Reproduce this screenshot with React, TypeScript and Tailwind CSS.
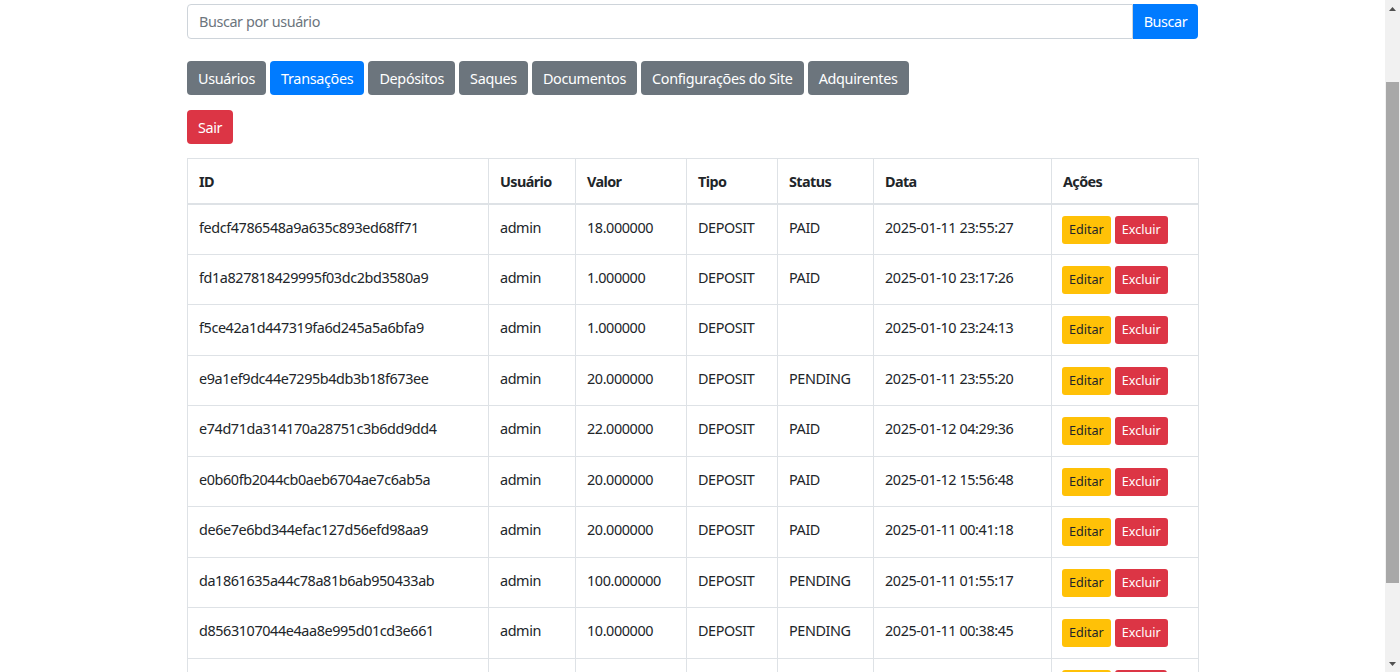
import React from "react";

const rows = [
  ["fedcf4786548a9a635c893ed68ff71", "admin", "18.000000", "DEPOSIT", "PAID", "2025-01-11 23:55:27"],
  ["fd1a827818429995f03dc2bd3580a9", "admin", "1.000000", "DEPOSIT", "PAID", "2025-01-10 23:17:26"],
  ["f5ce42a1d447319fa6d245a5a6bfa9", "admin", "1.000000", "DEPOSIT", "", "2025-01-10 23:24:13"],
  ["e9a1ef9dc44e7295b4db3b18f673ee", "admin", "20.000000", "DEPOSIT", "PENDING", "2025-01-11 23:55:20"],
  ["e74d71da314170a28751c3b6dd9dd4", "admin", "22.000000", "DEPOSIT", "PAID", "2025-01-12 04:29:36"],
  ["e0b60fb2044cb0aeb6704ae7c6ab5a", "admin", "20.000000", "DEPOSIT", "PAID", "2025-01-12 15:56:48"],
  ["de6e7e6bd344efac127d56efd98aa9", "admin", "20.000000", "DEPOSIT", "PAID", "2025-01-11 00:41:18"],
  ["da1861635a44c78a81b6ab950433ab", "admin", "100.000000", "DEPOSIT", "PENDING", "2025-01-11 01:55:17"],
  ["d8563107044e4aa8e995d01cd3e661", "admin", "10.000000", "DEPOSIT", "PENDING", "2025-01-11 00:38:45"],
];

const tabs = ["Usuários", "Transações", "Depósitos", "Saques", "Documentos", "Configurações do Site", "Adquirentes"];

export default function App() {
  return (
    <div
      className="flex h-[672px] w-[1400px] overflow-hidden bg-white text-[#212529]"
      style={{ fontFamily: '"Noto Sans", "Open Sans", sans-serif' }}
    >
      <div className="flex-1 overflow-hidden">
        <div className="mx-auto w-[1011px] pt-[4px] text-[14.4px] leading-[21.6px] tracking-[-0.4px]">
          <div className="flex h-[35px]">
            <div className="flex flex-1 items-center rounded-l-[4px] border border-[#ced4da] px-[11px] pt-[1px] text-[#6c757d]">
              Buscar por usuário
            </div>
            <button className="w-[65px] rounded-r-[4px] bg-[#007bff] pt-[1px] text-white">Buscar</button>
          </div>

          <div className="mt-[22px] flex gap-[4px] tracking-[-0.32px]">
            {tabs.map((t) => (
              <button
                key={t}
                className={`h-[34px] rounded-[4px] px-[11px] pt-[1px] text-white ${t === "Transações" ? "bg-[#007bff]" : "bg-[#6c757d]"}`}
              >
                {t}
              </button>
            ))}
          </div>

          <div className="mt-[15px]">
            <button className="h-[34px] rounded-[4px] bg-[#dc3545] px-[11px] pt-[1px] text-white">Sair</button>
          </div>

          <table className="mt-[14px] w-[1011px] table-fixed border-collapse border border-[#dee2e6]">
            <colgroup>
              <col className="w-[301px]" />
              <col className="w-[87px]" />
              <col className="w-[111px]" />
              <col className="w-[91px]" />
              <col className="w-[96px]" />
              <col className="w-[178px]" />
              <col className="w-[147px]" />
            </colgroup>
            <thead>
              <tr className="h-[45px]">
                {["ID", "Usuário", "Valor", "Tipo", "Status", "Data", "Ações"].map((h) => (
                  <th
                    key={h}
                    className="border border-b-2 border-[#dee2e6] px-[11px] pt-[12px] text-left align-top font-bold tracking-[-0.6px]"
                  >
                    {h}
                  </th>
                ))}
              </tr>
            </thead>
            <tbody>
              {rows.map((r) => (
                <tr key={r[0]} className="h-[50.5px]">
                  {r.map((c, i) => (
                    <td key={i} className="border border-[#dee2e6] px-[11px] pt-[12px] align-top whitespace-nowrap">
                      {c}
                    </td>
                  ))}
                  <td className="border border-[#dee2e6] px-[10px] pt-[11px] align-top">
                    <div className="flex gap-[4px] text-[12.6px] tracking-normal">
                      <button className="h-[28px] rounded-[3px] bg-[#ffc107] px-[7px] text-[#212529]">Editar</button>
                      <button className="h-[28px] rounded-[3px] bg-[#dc3545] px-[7px] text-white">Excluir</button>
                    </div>
                  </td>
                </tr>
              ))}
              <tr className="h-[50.5px]">
                {[0, 1, 2, 3, 4, 5].map((i) => (
                  <td key={i} className="border border-[#dee2e6]" />
                ))}
                <td className="border border-[#dee2e6] px-[10px] pt-[11px] align-top">
                  <div className="flex gap-[4px]">
                    <div className="h-[28px] w-[49px] rounded-[3px] bg-[#ffc107]" />
                    <div className="h-[28px] w-[52px] rounded-[3px] bg-[#dc3545]" />
                  </div>
                </td>
              </tr>
            </tbody>
          </table>
        </div>
      </div>
      <div className="flex w-[15px] flex-col items-center bg-[#f1f1f1]">
        <div className="flex h-[17px] items-center justify-center">
          <svg width="7" height="4" viewBox="0 0 7 4"><path d="M3.5 0 L7 4 L0 4 Z" fill="#505050" /></svg>
        </div>
        <div className="mt-[65px] h-[501px] w-[13px] bg-[#a8a8a8]" />
        <div className="flex-1" />
        <div className="flex h-[17px] items-center justify-center">
          <svg width="7" height="4" viewBox="0 0 7 4"><path d="M0 0 L7 0 L3.5 4 Z" fill="#505050" /></svg>
        </div>
      </div>
    </div>
  );
}
